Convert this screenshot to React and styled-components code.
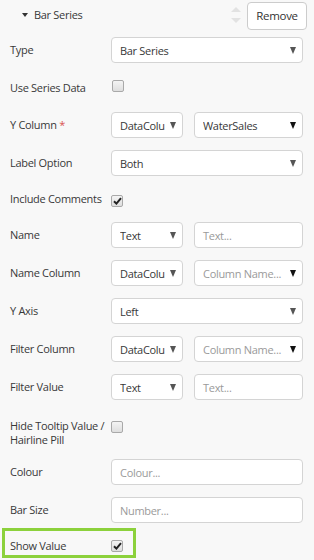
import React from 'react';
import styled, { createGlobalStyle } from 'styled-components';

const GlobalStyle = createGlobalStyle`
  html, body {
    margin: 0;
    padding: 0;
    background: #f8f8f8;
  }
  body {
    font-family: 'Open Sans', 'Noto Sans', sans-serif;
    font-size: 11px;
    letter-spacing: -0.3px;
    color: #383838;
  }
`;

const Panel = styled.div`
  width: 314px;
  height: 560px;
  box-sizing: border-box;
  padding: 0 11px 0 10px;
  overflow: hidden;
`;

const Header = styled.div`
  display: flex;
  align-items: center;
  height: 30px;
  margin-right: -4px;
`;

const Caret = styled.span`
  width: 0;
  height: 0;
  margin: 0 6px 0 12px;
  border-left: 3px solid transparent;
  border-right: 3px solid transparent;
  border-top: 4px solid #333;
`;

const Title = styled.span`
  flex: 1;
  padding-bottom: 1px;
`;

const Stepper = styled.div`
  display: flex;
  flex-direction: column;
  gap: 6px;
  margin-right: 6px;
`;

const StepArrow = styled.span`
  width: 0;
  height: 0;
  border-left: 5px solid transparent;
  border-right: 5px solid transparent;
  ${p => (p.down ? 'border-top: 5px solid #e2e2e2;' : 'border-bottom: 5px solid #e2e2e2;')}
`;

const Button = styled.button`
  height: 28px;
  width: 60px;
  margin-top: 1px;
  background: #fff;
  border: 1px solid #ccc;
  border-radius: 4px;
  font: inherit;
  font-size: 11.5px;
  letter-spacing: -0.3px;
  color: #333;
  padding: 0;
`;

const Form = styled.div`
  display: flex;
  flex-direction: column;
  gap: 12px;
  margin-top: 7px;
`;

const Row = styled.div`
  display: flex;
  align-items: ${p => (p.top ? 'flex-start' : 'center')};
  height: ${p => p.h || 26}px;
  ${p => p.top && 'padding-top: 7px; box-sizing: border-box;'}
`;

const HighlightRow = styled.div`
  display: flex;
  align-items: center;
  box-sizing: border-box;
  width: 134px;
  height: 30px;
  margin: -7px 0 0 -8px;
  padding: 5px 0 0 5px;
  border: 3px solid #8cd13c;
`;

const Label = styled.div`
  width: 101px;
  flex-shrink: 0;
  line-height: 14px;
  white-space: nowrap;
`;

const Required = styled.span`
  color: #d9534f;
`;

const Controls = styled.div`
  flex: 1;
  min-width: 0;
  display: flex;
  gap: 11px;
  height: 100%;
`;

const Field = styled.div`
  box-sizing: border-box;
  height: 26px;
  min-width: 0;
  width: ${p => (p.w ? `${p.w}px` : 'auto')};
  flex: ${p => (p.w ? 'none' : 1)};
  display: flex;
  align-items: center;
  padding: 0 6px 0 8px;
  background: #fff;
  border: 1px solid #d4d4d4;
  border-radius: 4px;
  color: ${p => (p.placeholder ? '#9a9a9a' : '#383838')};
  white-space: nowrap;
  overflow: hidden;
`;

const FieldText = styled.span`
  flex: 1;
  min-width: 0;
  overflow: hidden;
  text-overflow: ellipsis;
`;

const Arrow = styled.span`
  flex-shrink: 0;
  width: 0;
  height: 0;
  margin-left: 3px;
  border-left: 3.5px solid transparent;
  border-right: 3.5px solid transparent;
  border-top: 7px solid ${p => (p.dark ? '#111' : '#555')};
`;

const Box = styled.span`
  box-sizing: border-box;
  width: 12px;
  height: 12px;
  margin-left: ${p => p.ml || 0}px;
  margin-top: ${p => p.mt || 0}px;
  border: 1px solid #a9a9a9;
  border-radius: 2px;
  background: linear-gradient(#f4f4f4, #dedede);
  display: flex;
  align-items: center;
  justify-content: center;
  flex-shrink: 0;
`;

const Check = () => (
  <svg width="9" height="8" viewBox="0 0 9 8">
    <path d="M1 4.3 L3.4 6.6 L8 1.2" fill="none" stroke="#222" strokeWidth="2" />
  </svg>
);

const Checkbox = ({ checked, ml, mt }) => (
  <Box ml={ml} mt={mt}>{checked && <Check />}</Box>
);

const Select = ({ children, w, placeholder, dark }) => (
  <Field w={w} placeholder={placeholder}>
    <FieldText>{children}</FieldText>
    <Arrow dark={dark} />
  </Field>
);

const Input = ({ children }) => <Field placeholder>{children}</Field>;

const App = () => {
  return (
    <Panel>
      <GlobalStyle />
      <Header>
        <Caret />
        <Title>Bar Series</Title>
        <Stepper>
          <StepArrow />
          <StepArrow down />
        </Stepper>
        <Button>Remove</Button>
      </Header>
      <Form>
        <Row>
          <Label>Type</Label>
          <Controls>
            <Select>Bar Series</Select>
          </Controls>
        </Row>
        <Row h={25}>
          <Label>Use Series Data</Label>
          <Checkbox ml={1} mt={-3} />
        </Row>
        <Row>
          <Label>Y Column <Required>*</Required></Label>
          <Controls>
            <Select w={72}>DataColu</Select>
            <Select dark>WaterSales</Select>
          </Controls>
        </Row>
        <Row>
          <Label>Label Option</Label>
          <Controls>
            <Select>Both</Select>
          </Controls>
        </Row>
        <Row h={22}>
          <Label>Include Comments</Label>
          <Checkbox checked mt={3} />
        </Row>
        <Row>
          <Label>Name</Label>
          <Controls>
            <Select w={72}>Text</Select>
            <Input>Text...</Input>
          </Controls>
        </Row>
        <Row>
          <Label>Name Column</Label>
          <Controls>
            <Select w={72}>DataColu</Select>
            <Select placeholder dark>Column Name...</Select>
          </Controls>
        </Row>
        <Row>
          <Label>Y Axis</Label>
          <Controls>
            <Select>Left</Select>
          </Controls>
        </Row>
        <Row>
          <Label>Filter Column</Label>
          <Controls>
            <Select w={72}>DataColu</Select>
            <Select placeholder dark>Column Name...</Select>
          </Controls>
        </Row>
        <Row>
          <Label>Filter Value</Label>
          <Controls>
            <Select w={72}>Text</Select>
            <Input>Text...</Input>
          </Controls>
        </Row>
        <Row h={35} top>
          <Label>Hide Tooltip Value /<br />Hairline Pill</Label>
          <Checkbox mt={2} />
        </Row>
        <Row>
          <Label>Colour</Label>
          <Controls>
            <Input>Colour...</Input>
          </Controls>
        </Row>
        <Row>
          <Label>Bar Size</Label>
          <Controls>
            <Input>Number...</Input>
          </Controls>
        </Row>
        <HighlightRow>
          <Label>Show Value</Label>
          <Checkbox checked />
        </HighlightRow>
      </Form>
    </Panel>
  );
};

export default App;
